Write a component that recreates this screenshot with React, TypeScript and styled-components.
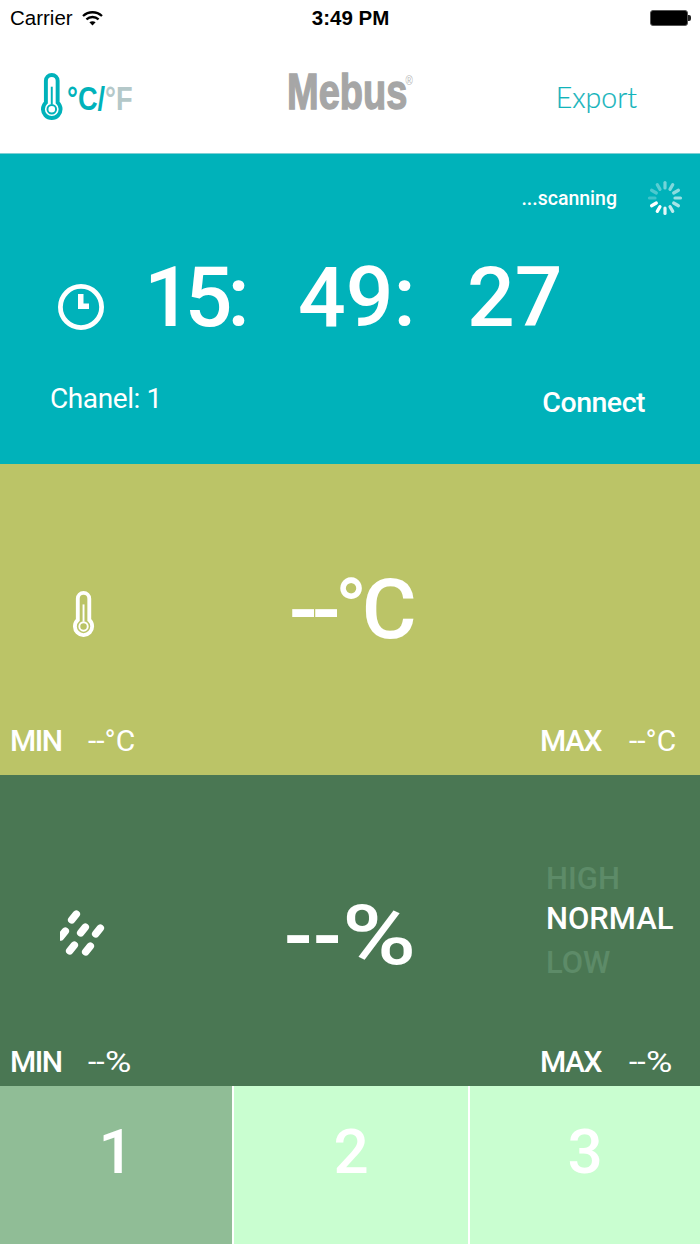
import styled, { createGlobalStyle } from 'styled-components';

const GlobalStyle = createGlobalStyle`
  html, body { margin: 0; padding: 0; background: #fff; }
  body { font-family: 'Roboto', 'Noto Sans', sans-serif; }
`;

const Page = styled.div`
  width: 700px;
  height: 1244px;
  display: flex;
  flex-direction: column;
  overflow: hidden;
  color: #fff;
`;

const StatusBar = styled.div`
  height: 40px;
  box-sizing: border-box;
  padding: 0 9px 4px 10px;
  display: grid;
  grid-template-columns: 1fr auto 1fr;
  align-items: center;
  background: #fff;
  color: #000;
  font-family: 'Liberation Sans', sans-serif;
  font-size: 20.5px;
`;

const Carrier = styled.div`
  display: flex;
  align-items: center;
  gap: 9px;
`;

const Time = styled.div`
  font-weight: 700;
  font-size: 20.5px;
`;

const Battery = styled.div`
  justify-self: end;
  display: flex;
  align-items: center;
`;

const BatteryBody = styled.div`
  width: 38px;
  height: 16px;
  box-sizing: border-box;
  background: #000;
  border: 1px solid #555;
  border-radius: 3px;
`;

const BatteryTip = styled.div`
  width: 3px;
  height: 6px;
  background: #222;
  border-radius: 0 2px 2px 0;
`;

const Header = styled.header`
  height: 114px;
  box-sizing: border-box;
  border-bottom: 1px solid #7fcfd4;
  padding: 0 63px 0 41px;
  display: grid;
  grid-template-columns: 227px auto 1fr;
  align-items: center;
  background: #fff;
`;

const UnitToggle = styled.div`
  display: flex;
  align-items: flex-end;
  gap: 4px;
  height: 47px;
`;

const UnitText = styled.div`
  font-family: 'Liberation Sans', sans-serif;
  font-weight: 700;
  font-size: 34px;
  line-height: 36px;
  padding-bottom: 4px;
  transform: scaleX(0.8);
  transform-origin: left center;
  white-space: nowrap;
`;

const Unit = styled.span<{ $active?: boolean }>`
  color: ${p => (p.$active ? '#00b2ba' : '#b4c8c9')};
`;

const Logo = styled.div`
  position: relative;
  font-family: 'Liberation Sans', sans-serif;
  font-weight: 700;
  font-size: 50px;
  line-height: 50px;
  color: #a6a6a6;
  transform: scaleX(0.76);
  -webkit-text-stroke: 1.4px #a6a6a6;
  margin-top: -10px;
`;

const Registered = styled.span`
  position: absolute;
  top: 7px;
  right: -7px;
  font-size: 13px;
  line-height: 14px;
  font-weight: 400;
  -webkit-text-stroke: 0;
  color: #b5b5b5;
`;

const Export = styled.div`
  justify-self: end;
  font-family: 'Lato', sans-serif;
  font-weight: 300;
  font-size: 28.5px;
  color: #12b3ba;
  -webkit-text-stroke: 0.2px #12b3ba;
`;

const Panel = styled.section<{ $bg: string }>`
  height: 311px;
  background: ${p => p.$bg};
  display: flex;
  flex-direction: column;
  box-sizing: border-box;
`;

const ClockPanel = styled(Panel)`
  height: 310px;
  padding: 26px 17px 43px 50px;
  justify-content: space-between;
`;

const ScanRow = styled.div`
  display: flex;
  justify-content: flex-end;
  align-items: center;
  gap: 30px;
  height: 36px;
  font-size: 19.5px;
  font-weight: 500;
`;

const ClockRow = styled.div`
  display: flex;
  align-items: flex-start;
  padding-left: 8px;
  margin-top: -3px;
`;

const ClockGlyph = styled.svg`
  flex: none;
  margin-top: 31px;
`;

const ClockDigits = styled.div`
  display: flex;
  margin-left: 40px;
  font-size: 84px;
  line-height: 90px;
  font-weight: 500;
`;

const ClockPart = styled.span<{ $width: number; $spacing?: number }>`
  width: ${p => p.$width}px;
  letter-spacing: ${p => p.$spacing ?? 0}px;
  white-space: nowrap;
`;

const NarrowOne = styled.span`
  letter-spacing: -7px;
`;

const ClockFoot = styled.div`
  display: flex;
  justify-content: space-between;
  align-items: flex-end;
  padding-right: 38px;
`;

const Chanel = styled.div`
  font-size: 28px;
  line-height: 34px;
  letter-spacing: -0.4px;
  margin-bottom: 5px;
`;

const Connect = styled.div`
  font-size: 28.5px;
  line-height: 34px;
  font-weight: 500;
  letter-spacing: -0.5px;
  margin-bottom: 1px;
`;

const MainRow = styled.div`
  flex: 1;
  display: grid;
  grid-template-columns: 166px 1fr 166px;
  align-items: center;
`;

const IconCell = styled.div<{ $offset: number; $left?: number }>`
  display: flex;
  justify-content: center;
  margin-top: ${p => p.$offset}px;
  padding-left: ${p => p.$left ?? 0}px;
`;

const BigValue = styled.div<{ $offset: number; $spacing: number }>`
  text-align: center;
  font-size: 84px;
  line-height: 100px;
  font-weight: 500;
  letter-spacing: ${p => p.$spacing}px;
  margin-top: ${p => p.$offset}px;
`;

/* the % in the reference is wider than Roboto's, same height */
const PercentSign = styled.span`
  display: inline-block;
  transform: scaleX(1.2);
  transform-origin: left center;
  margin-right: 0.14em;
`;

const Levels = styled.div`
  display: flex;
  flex-direction: column;
  gap: 4px;
  padding-left: 12px;
  margin-top: 23px;
`;

const Level = styled.div<{ $on?: boolean }>`
  font-size: 31px;
  line-height: 36px;
  font-weight: 500;
  color: ${p => (p.$on ? '#fff' : '#5d8b68')};
  margin-bottom: ${p => (p.$on ? 4 : 0)}px;
`;

const ReadingRow = styled.div<{ $bottom: number }>`
  display: flex;
  justify-content: space-between;
  padding: 0 0 ${p => p.$bottom}px 10px;
`;

const Reading = styled.div<{ $labelWidth: number }>`
  display: grid;
  grid-template-columns: ${p => p.$labelWidth}px 1fr;
  width: 160px;
  font-size: 30px;
  line-height: 36px;
`;

const ReadingLabel = styled.span`
  font-weight: 500;
  letter-spacing: -1.5px;
`;

const ReadingValue = styled.span<{ $spacing?: number }>`
  letter-spacing: ${p => p.$spacing ?? 0}px;
`;

const Tabs = styled.nav`
  flex: 1;
  display: grid;
  grid-template-columns: 232px 234px 1fr;
  gap: 2px;
  background: #fff;
`;

const Tab = styled.div<{ $active?: boolean }>`
  display: flex;
  align-items: center;
  justify-content: center;
  background: ${p => (p.$active ? '#90bd96' : '#c9fed0')};
  font-size: 62px;
  font-weight: 500;
  padding-bottom: 28px;
`;

const SPINNER_TICKS = [0.45, 0.5, 0.55, 0.6, 0.65, 0.75, 0.9, 1, 1, 0.25, 0.3, 0.35];

function Spinner() {
  return (
    <svg width="36" height="36" viewBox="-18 -18 36 36">
      {SPINNER_TICKS.map((opacity, i) => (
        <line
          key={i}
          x1="0"
          y1="-10"
          x2="0"
          y2="-15.5"
          stroke="#fff"
          strokeWidth="3.2"
          strokeLinecap="round"
          opacity={opacity}
          transform={`rotate(${i * 30})`}
        />
      ))}
    </svg>
  );
}

function WifiIcon() {
  return (
    <svg width="21" height="15" viewBox="0 0 21 15" fill="none" stroke="#000" strokeWidth="2.3">
      <path d="M1 5 C6.5 0 14.5 0 20 5" />
      <path d="M4.4 8.3 C8 5.2 13 5.2 16.6 8.3" />
      <path d="M10.5 14.6 L7.4 11.3 C9.2 10 11.8 10 13.6 11.3 Z" fill="#000" stroke="none" />
    </svg>
  );
}

function Thermometer({ color, size }: { color: string; size: number }) {
  return (
    <svg width={(size * 22) / 48} height={size} viewBox="0 0 22 48" fill="none">
      <path
        d="M5 30.3 V8 a6 6 0 0 1 12 0 V30.3 a9 9 0 1 1 -12 0 Z"
        stroke={color}
        strokeWidth="4"
      />
      <path d="M11 14 V32" stroke={color} strokeWidth="2" />
      <circle cx="11" cy="37" r="4.4" stroke={color} strokeWidth="2" />
    </svg>
  );
}

function ClockIcon() {
  return (
    <ClockGlyph width="46" height="46" viewBox="0 0 46 46" fill="none">
      <circle cx="23" cy="23" r="20.6" stroke="#fff" strokeWidth="4.8" />
      <path d="M20 10 H25.5 V19.5 H31 V25 H20 Z" fill="#fff" />
    </ClockGlyph>
  );
}

function HumidityIcon() {
  const drops = [
    [16, 7],
    [5, 24],
    [25, 20],
    [40, 21],
    [14, 38],
    [30, 39],
  ];
  return (
    <svg width="46" height="46" viewBox="2 0 46 46">
      {drops.map(([x, y], i) => (
        <line
          key={i}
          x1={x - 2.3}
          y1={y + 2.8}
          x2={x + 2.3}
          y2={y - 2.8}
          stroke="#fff"
          strokeWidth="7.5"
          strokeLinecap="round"
        />
      ))}
    </svg>
  );
}

export default function App() {
  return (
    <Page>
      <GlobalStyle />
      <StatusBar>
        <Carrier>
          Carrier
          <WifiIcon />
        </Carrier>
        <Time>3:49 PM</Time>
        <Battery>
          <BatteryBody />
          <BatteryTip />
        </Battery>
      </StatusBar>
      <Header>
        <UnitToggle>
          <Thermometer color="#00b2ba" size={47} />
          <UnitText>
            <Unit $active>°C/</Unit>
            <Unit>°F</Unit>
          </UnitText>
        </UnitToggle>
        <Logo>
          Mebus
          <Registered>®</Registered>
        </Logo>
        <Export>Export</Export>
      </Header>
      <ClockPanel $bg="#00b2ba">
        <ScanRow>
          ...scanning
          <Spinner />
        </ScanRow>
        <ClockRow>
          <ClockIcon />
          <ClockDigits>
            <ClockPart $width={154} $spacing={-5}>
              <NarrowOne>1</NarrowOne>5:
            </ClockPart>
            <ClockPart $width={169}>49:</ClockPart>
            <ClockPart $width={100}>27</ClockPart>
          </ClockDigits>
        </ClockRow>
        <ClockFoot>
          <Chanel>Chanel: 1</Chanel>
          <Connect>Connect</Connect>
        </ClockFoot>
      </ClockPanel>
      <Panel $bg="#bbc467">
        <MainRow>
          <IconCell $offset={40} $left={2}>
            <Thermometer color="#fff" size={46} />
          </IconCell>
          <BigValue $offset={32} $spacing={-5.5}>--°C</BigValue>
        </MainRow>
        <ReadingRow $bottom={16}>
          <Reading $labelWidth={78}>
            <ReadingLabel>MIN</ReadingLabel>
            <ReadingValue>--°C</ReadingValue>
          </Reading>
          <Reading $labelWidth={89}>
            <ReadingLabel>MAX</ReadingLabel>
            <ReadingValue>--°C</ReadingValue>
          </Reading>
        </ReadingRow>
      </Panel>
      <Panel $bg="#4a7753">
        <MainRow>
          <IconCell $offset={47}>
            <HumidityIcon />
          </IconCell>
          <BigValue $offset={52} $spacing={0.5}>
            --<PercentSign>%</PercentSign>
          </BigValue>
          <Levels>
            <Level>HIGH</Level>
            <Level $on>NORMAL</Level>
            <Level>LOW</Level>
          </Levels>
        </MainRow>
        <ReadingRow $bottom={6}>
          <Reading $labelWidth={78}>
            <ReadingLabel>MIN</ReadingLabel>
            <ReadingValue>
              --<PercentSign>%</PercentSign>
            </ReadingValue>
          </Reading>
          <Reading $labelWidth={89}>
            <ReadingLabel>MAX</ReadingLabel>
            <ReadingValue>
              --<PercentSign>%</PercentSign>
            </ReadingValue>
          </Reading>
        </ReadingRow>
      </Panel>
      <Tabs>
        <Tab $active>1</Tab>
        <Tab>2</Tab>
        <Tab>3</Tab>
      </Tabs>
    </Page>
  );
}
